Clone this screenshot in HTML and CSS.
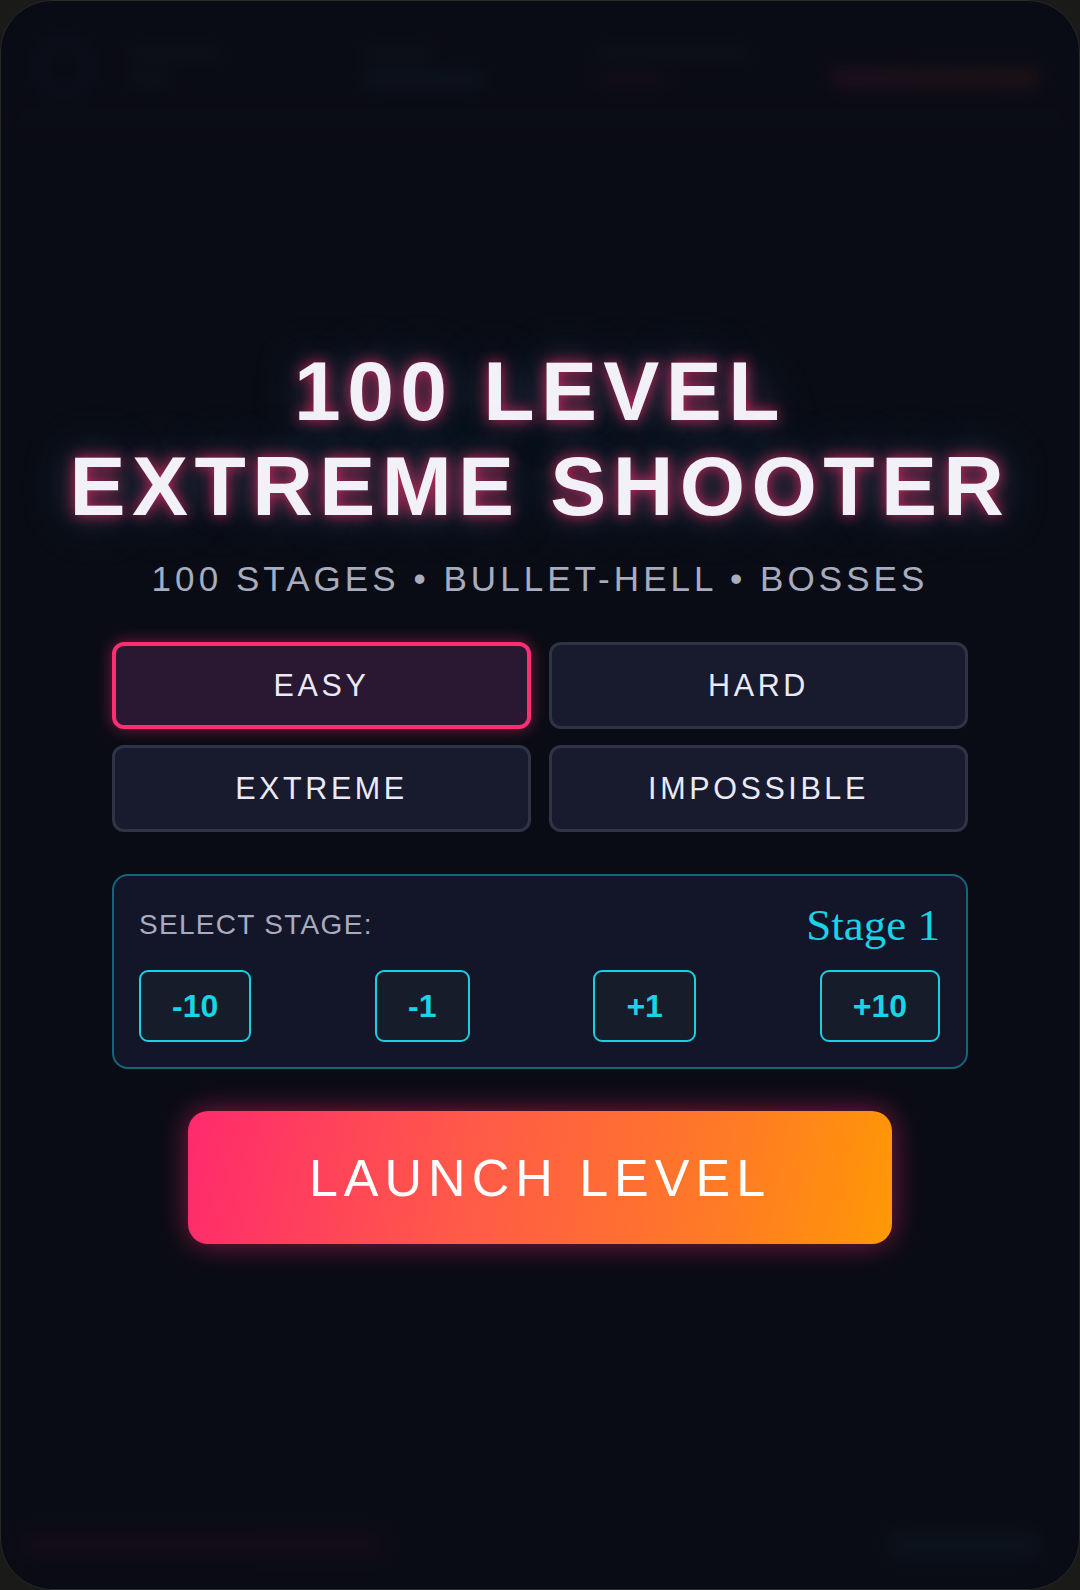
FILE: index.html
```html
<!DOCTYPE html>
<html lang="en">
<head>
<meta charset="utf-8">
<title>100 Level Extreme Shooter</title>
<link rel="stylesheet" href="styles.css">
</head>
<body>
<div class="screen">
  <div class="hud">
    <div class="hud-top">
      <div class="hud-ring"></div>
      <div class="hud-stack">
        <div class="hud-line w90"></div>
        <div class="hud-line w40"></div>
      </div>
      <div class="hud-stack">
        <div class="hud-line w70"></div>
        <div class="hud-line w120 teal"></div>
      </div>
      <div class="hud-stack">
        <div class="hud-line w150"></div>
        <div class="hud-line w70 red"></div>
      </div>
      <div class="hud-bar"></div>
    </div>
    <div class="hud-rule"></div>
    <div class="hud-spacer"></div>
    <div class="hud-bottom">
      <div class="hud-health"></div>
      <div class="hud-chip"></div>
    </div>
  </div>

  <div class="overlay">
    <h1 class="title">100 LEVEL<br>EXTREME SHOOTER</h1>
    <p class="subtitle">100 STAGES • BULLET-HELL • BOSSES</p>

    <div class="difficulty">
      <button class="diff selected">EASY</button>
      <button class="diff">HARD</button>
      <button class="diff">EXTREME</button>
      <button class="diff">IMPOSSIBLE</button>
    </div>

    <div class="stage-panel">
      <div class="stage-head">
        <span class="stage-label">SELECT STAGE:</span>
        <span class="stage-value">Stage 1</span>
      </div>
      <div class="stage-steps">
        <button class="step">-10</button>
        <button class="step">-1</button>
        <button class="step">+1</button>
        <button class="step">+10</button>
      </div>
    </div>

    <button class="launch">LAUNCH LEVEL</button>
  </div>
</div>
</body>
</html>
```

FILE: styles.css
```css
* { box-sizing: border-box; }

html, body {
  margin: 0;
  padding: 0;
  width: 1080px;
  height: 1590px;
  background: #1a1a18;
  font-family: "Liberation Sans", Arial, sans-serif;
}

.screen {
  position: relative;
  width: 1080px;
  height: 1590px;
  border-radius: 52px;
  overflow: hidden;
  background: #0b0c16;
  border: 1px solid #2a2a2c;
}

/* blurred game HUD beneath the overlay */
.hud {
  display: flex;
  flex-direction: column;
  height: 100%;
  filter: blur(8px);
  opacity: 0.8;
}

.hud-top {
  display: flex;
  align-items: center;
  gap: 36px;
  padding: 24px 40px 0 34px;
  height: 108px;
}

.hud-ring {
  width: 58px;
  height: 58px;
  border-radius: 50%;
  border: 6px solid #161d2e;
}

.hud-stack {
  display: flex;
  flex-direction: column;
  gap: 14px;
  width: 200px;
}

.hud-line { height: 12px; border-radius: 4px; background: #181a26; }
.hud-line.w40 { width: 40px; }
.hud-line.w70 { width: 70px; }
.hud-line.w90 { width: 90px; }
.hud-line.w120 { width: 120px; }
.hud-line.w150 { width: 150px; }
.hud-line.teal { background: #0f2a33; }
.hud-line.red { background: #2a1220; }

.hud-bar {
  margin-left: auto;
  width: 210px;
  height: 22px;
  margin-top: 22px;
  border-radius: 6px;
  background: linear-gradient(90deg, #3a1426, #3a1c16);
}

.hud-rule {
  height: 4px;
  margin: 6px 20px 0;
  background: #101828;
}

.hud-spacer { flex: 1; }

.hud-bottom {
  display: flex;
  justify-content: space-between;
  align-items: center;
  padding: 0 40px 18px 20px;
  height: 70px;
}

.hud-health {
  width: 360px;
  height: 26px;
  border-radius: 6px;
  background: #220f1c;
}

.hud-chip {
  width: 150px;
  height: 26px;
  border-radius: 6px;
  background: #0d1f28;
}

/* menu overlay */
.overlay {
  position: absolute;
  inset: 0;
  display: flex;
  flex-direction: column;
  align-items: center;
  justify-content: center;
  background: rgba(11, 12, 22, 0.55);
  padding-bottom: 2px;
}

.title {
  margin: 0;
  font-size: 84px;
  line-height: 95px;
  font-weight: 700;
  letter-spacing: 6.4px;
  text-align: center;
  color: #f2f1f8;
  text-shadow:
    0 0 14px rgba(255, 46, 112, 0.75),
    0 0 30px rgba(255, 46, 112, 0.3),
    0 0 50px rgba(0, 200, 230, 0.35);
}

.subtitle {
  margin: 25px 0 0;
  font-size: 35px;
  line-height: 40px;
  letter-spacing: 4.05px;
  color: #a8acbf;
}

.difficulty {
  margin-top: 43px;
  width: 856px;
  display: grid;
  grid-template-columns: 1fr 1fr;
  column-gap: 18px;
  row-gap: 16px;
}

.diff {
  height: 87px;
  border-radius: 12px;
  border: 3px solid #2e3446;
  background: #181a2d;
  color: #e9eaf6;
  font-family: "Liberation Sans", Arial, sans-serif;
  font-size: 30.5px;
  letter-spacing: 3.6px;
  padding: 0;
}

.diff.selected {
  border: 4px solid #ff2e72;
  background: #2a1731;
  box-shadow: 0 0 16px rgba(255, 46, 114, 0.45);
}

.stage-panel {
  margin-top: 42px;
  width: 856px;
  border: 2px solid rgba(25, 200, 225, 0.45);
  border-radius: 16px;
  background: #131529;
  padding: 24px 26px 25px 25px;
}

.stage-head {
  display: flex;
  justify-content: space-between;
  align-items: center;
  height: 50px;
}

.stage-label {
  font-size: 28px;
  letter-spacing: 1.3px;
  color: #a9acbe;
}

.stage-value {
  font-family: "Liberation Serif", "Times New Roman", serif;
  font-size: 45px;
  color: #19d3e6;
}

.stage-steps {
  margin-top: 20px;
  display: flex;
  justify-content: space-between;
}

.step {
  height: 72px;
  padding: 0 31px;
  border: 2.5px solid #19cfe2;
  border-radius: 9px;
  background: #161c29;
  color: #19d3e6;
  font-family: "Liberation Sans", Arial, sans-serif;
  font-weight: 700;
  font-size: 32px;
}

.launch {
  margin-top: 42px;
  width: 704px;
  height: 133px;
  border: none;
  border-radius: 20px;
  background: linear-gradient(100deg, #ff2a6d 0%, #ff5a48 40%, #ff7a26 75%, #ff9805 100%);
  box-shadow: 0 0 28px rgba(255, 40, 110, 0.5);
  color: #ffffff;
  font-family: "Liberation Sans", Arial, sans-serif;
  font-size: 52px;
  letter-spacing: 6px;
  padding: 0;
}
```
